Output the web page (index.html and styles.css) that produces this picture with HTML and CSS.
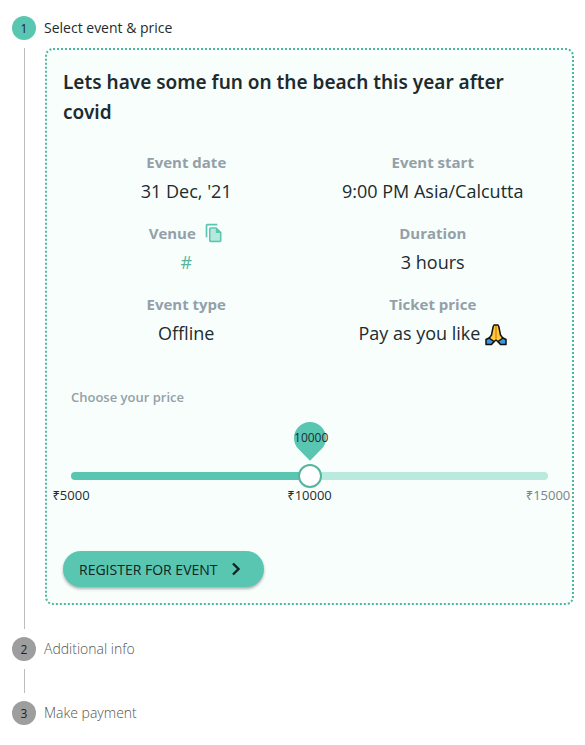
FILE: index.html
```html
<!DOCTYPE html>
<html lang="en">
<head>
<meta charset="utf-8">
<meta name="viewport" content="width=device-width, initial-scale=1">
<title>Event registration</title>
<link rel="stylesheet" href="styles.css">
</head>
<body>
<main>
  <ol class="stepper">
    <li class="step step-active">
      <span class="step-icon">1</span>
      <span class="step-label">Select event &amp; price</span>
      <div class="step-line"></div>
      <section class="card">
        <h1 class="title">Lets have some fun on the beach this year after covid</h1>
        <dl class="details">
          <div class="detail"><dt>Event date</dt><dd>31 Dec, '21</dd></div>
          <div class="detail"><dt>Event start</dt><dd>9:00 PM Asia/Calcutta</dd></div>
          <div class="detail">
            <dt>Venue
              <button class="copy" type="button" aria-label="Copy venue">
                <svg viewBox="0 0 24 24" width="20" height="20" fill="currentColor" aria-hidden="true">
                  <path opacity=".4" d="M14 7H8v14h11v-9h-5z"/>
                  <path d="M16 1H4c-1.100 0-2 .9-2 2v14h2V3h12V1zm-1 4H8c-1.100 0-1.990.9-1.990 2L6 21c0 1.100.89 2 1.990 2H19c1.100 0 2-.9 2-2V11l-6-6zm4 16H8V7h6v5h5v9z"/>
                </svg>
              </button>
            </dt>
            <dd><a class="link" href="#">#</a></dd>
          </div>
          <div class="detail"><dt>Duration</dt><dd>3 hours</dd></div>
          <div class="detail"><dt>Event type</dt><dd>Offline</dd></div>
          <div class="detail">
            <dt>Ticket price</dt>
            <dd>Pay as you like
              <svg class="hands" viewBox="0 0 22 22" width="22" height="22" role="img" aria-label="Folded hands">
                <g stroke="#111" stroke-width="1.500" stroke-linejoin="round">
                  <path fill="#ffc83d" d="M9 1h4l.8 1.500L15.500 11l3 4-4 4L11 16l-3.500 3-4-4 3-4 1.700-8.500z"/>
                  <path fill="#3a96dd" d="M4 14 9 17.500 6.500 20.500H1v-5zM18 14l-5 3.500 2.500 3H21v-5z"/>
                </g>
                <path d="M11 2v12.500" stroke="#d67d00" stroke-width="1.200"/>
              </svg>
            </dd>
          </div>
        </dl>
        <div class="price">
          <label class="price-label" for="price">Choose your price</label>
          <div class="slider" style="--position: 50%">
            <output class="bubble" for="price"><span>10000</span></output>
            <input class="range" id="price" type="range" min="5000" max="15000" step="100" value="10000">
            <div class="marks">
              <span>₹5000</span>
              <span>₹10000</span>
              <span class="mark-off">₹15000</span>
            </div>
          </div>
        </div>
        <button class="register" type="button">REGISTER FOR EVENT
          <svg viewBox="0 0 20 20" width="20" height="20" fill="none" stroke="currentColor" stroke-width="2.400" aria-hidden="true"><path d="m7 4.500 5.500 5.500L7 15.500"/></svg>
        </button>
      </section>
    </li>
    <li class="step">
      <span class="step-icon">2</span>
      <span class="step-label">Additional info</span>
      <div class="step-line"></div>
      <div class="step-spacer"></div>
    </li>
    <li class="step">
      <span class="step-icon">3</span>
      <span class="step-label">Make payment</span>
    </li>
  </ol>
</main>
</body>
</html>
```
FILE: styles.css
```css
:root {
  --teal: #59c6b2;
  --teal-dark: #55b59f;
  --ink: #1d2b2f;
  --muted: #94a0a8;
}

* { box-sizing: border-box; }

body {
  margin: 0;
  background: #fff;
  color: var(--ink);
  font-family: "Open Sans", "Noto Sans", sans-serif;
  font-size: 14px;
}

button { font: inherit; cursor: pointer; }

.stepper {
  list-style: none;
  margin: 0;
  padding: 16px 11px 16px 12px;
  display: grid;
  gap: 8px;
}

.step {
  display: grid;
  grid-template-columns: 24px minmax(0, 1fr);
  column-gap: 9px;
  row-gap: 8px;
}

.step-icon {
  display: grid;
  place-items: center;
  width: 24px;
  height: 24px;
  border-radius: 50%;
  background: #9e9e9e;
  color: #222;
  font-size: 12px;
}

.step-active .step-icon { background: var(--teal); }

.step-label { line-height: 24px; color: #555; margin-left: -1px; font-weight: 300; }
.step-active .step-label { color: var(--ink); font-weight: 400; }

.step-line { justify-self: center; width: 1px; background: #bdbdbd; }
.step-spacer { height: 24px; }

.card {
  margin-bottom: 24px;
  padding: 17px 16px 16px;
  border: 2px dotted var(--teal-dark);
  border-radius: 8px;
  background: #f7fefc;
}

.title {
  margin: 0 0 21px;
  font-family: "Noto Sans", "Open Sans", sans-serif;
  font-size: 19px;
  line-height: 30px;
  font-weight: 600;
}

.details {
  margin: 0;
  display: grid;
  grid-template-columns: 1fr 1fr;
  row-gap: 13px;
  text-align: center;
}

.details dt {
  display: flex;
  justify-content: center;
  align-items: center;
  gap: 8px;
  height: 28px;
  color: var(--muted);
  font-size: 15px;
  font-weight: 700;
}

.details dd { margin: 0; font-size: 18px; line-height: 30px; }

.copy {
  display: flex;
  padding: 0;
  border: 0;
  background: none;
  color: var(--teal);
}

.link { color: var(--teal-dark); text-decoration: none; }
.hands { vertical-align: middle; }

.price { margin: 37px 8px 0; }

.price-label {
  display: block;
  line-height: 24px;
  color: var(--muted);
  font-size: 13px;
  font-weight: 600;
}

.slider { position: relative; padding-top: 55px; }

.bubble {
  position: absolute;
  top: 13px;
  left: var(--position);
  width: 32px;
  height: 32px;
  margin-left: -16px;
  display: grid;
  place-items: center;
  border-radius: 50% 50% 50% 0;
  background: var(--teal);
  transform: rotate(-45deg);
  font-size: 12px;
}

.bubble span { transform: rotate(45deg); }

.range {
  -webkit-appearance: none;
  appearance: none;
  display: block;
  width: 100%;
  height: 24px;
  margin: 0;
  background: none;
}

.range::-webkit-slider-runnable-track {
  height: 8px;
  border-radius: 4px;
  background: linear-gradient(to right, var(--teal) var(--position), #b9eadd var(--position));
}

.range::-webkit-slider-thumb {
  -webkit-appearance: none;
  width: 24px;
  height: 24px;
  margin-top: -8px;
  border: 2px solid var(--teal-dark);
  border-radius: 50%;
  background: #fff;
}

.marks {
  display: flex;
  justify-content: space-between;
  font-size: 13px;
  line-height: 15px;
}

.marks span { width: 0; display: flex; justify-content: center; }
.marks .mark-off { color: #7d8385; }

.register {
  display: flex;
  align-items: center;
  gap: 8px;
  height: 36px;
  margin-top: 48px;
  padding: 0 18px 0 16px;
  border: 0;
  border-radius: 18px;
  background: var(--teal);
  color: #10231f;
  font-weight: 400;
  box-shadow: 0 2px 3px rgba(0, 0, 0, .3);
}
```
